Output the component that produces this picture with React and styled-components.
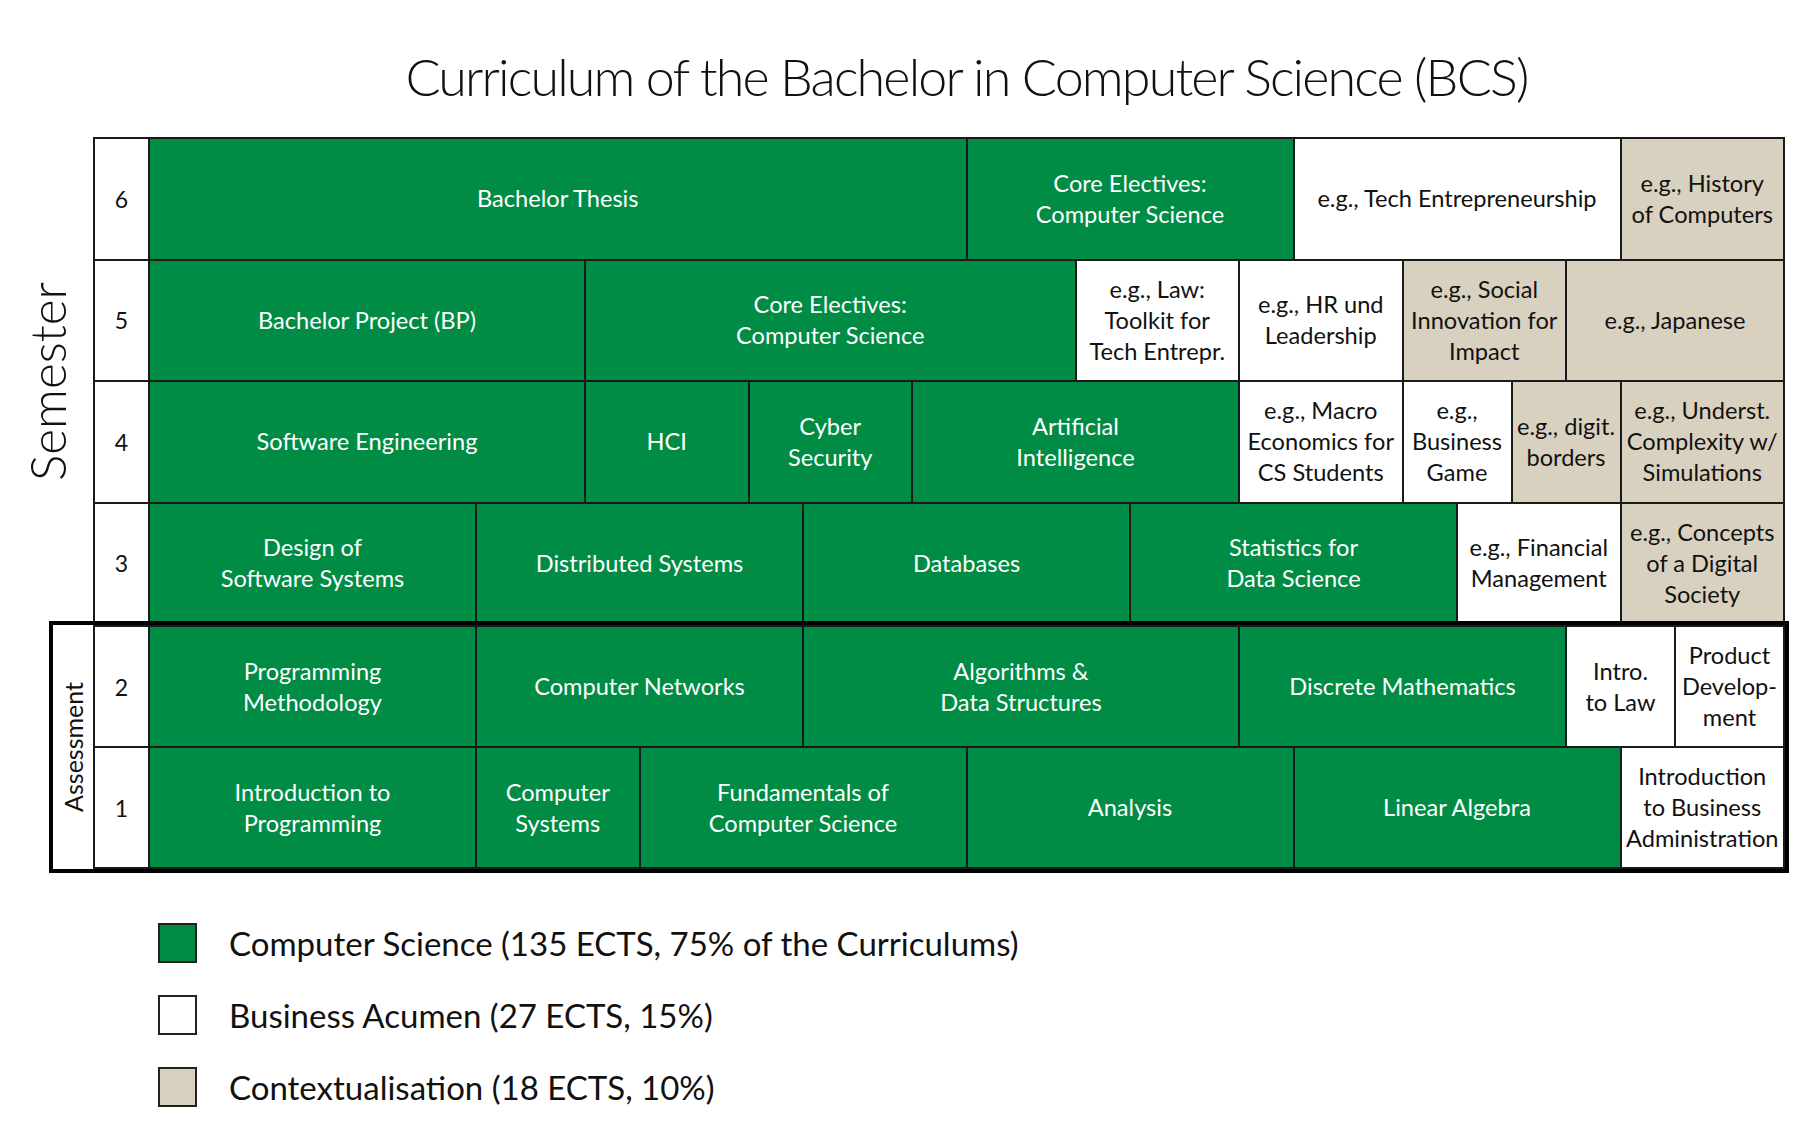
import styled, { createGlobalStyle } from "styled-components";

const GlobalStyle = createGlobalStyle`
  html, body {
    margin: 0;
    padding: 0;
    background: #ffffff;
  }
  body {
    font-family: Lato, "Open Sans", sans-serif;
    color: #1a1a1a;
  }
`;

const colors = {
  cs: "#008c44",
  ba: "#ffffff",
  ctx: "#d9d1bf",
  line: "#1a1a1a",
};

const upperRows = [
  {
    no: "6",
    cells: [
      { span: 15, kind: "cs", text: "Bachelor Thesis" },
      { span: 6, kind: "cs", text: "Core Electives:\nComputer Science" },
      { span: 6, kind: "ba", text: "e.g., Tech Entrepreneurship" },
      { span: 3, kind: "ctx", text: "e.g., History\nof Computers" },
    ],
  },
  {
    no: "5",
    cells: [
      { span: 8, kind: "cs", text: "Bachelor Project (BP)" },
      { span: 9, kind: "cs", text: "Core Electives:\nComputer Science" },
      { span: 3, kind: "ba", text: "e.g., Law:\nToolkit for\nTech Entrepr." },
      { span: 3, kind: "ba", text: "e.g., HR und\nLeadership" },
      { span: 3, kind: "ctx", text: "e.g.,  Social\nInnovation for\nImpact" },
      { span: 4, kind: "ctx", text: "e.g., Japanese" },
    ],
  },
  {
    no: "4",
    cells: [
      { span: 8, kind: "cs", text: "Software Engineering" },
      { span: 3, kind: "cs", text: "HCI" },
      { span: 3, kind: "cs", text: "Cyber\nSecurity" },
      { span: 6, kind: "cs", text: "Artificial\nIntelligence" },
      { span: 3, kind: "ba", text: "e.g., Macro\nEconomics for\nCS Students" },
      { span: 2, kind: "ba", text: "e.g.,\nBusiness\nGame" },
      { span: 2, kind: "ctx", text: "e.g., digit.\nborders" },
      { span: 3, kind: "ctx", text: "e.g., Underst.\nComplexity w/\nSimulations" },
    ],
  },
  {
    no: "3",
    cells: [
      { span: 6, kind: "cs", text: "Design of\nSoftware Systems" },
      { span: 6, kind: "cs", text: "Distributed Systems" },
      { span: 6, kind: "cs", text: "Databases" },
      { span: 6, kind: "cs", text: "Statistics for\nData Science" },
      { span: 3, kind: "ba", text: "e.g., Financial\nManagement" },
      { span: 3, kind: "ctx", text: "e.g., Concepts\nof a Digital\nSociety" },
    ],
  },
];

const lowerRows = [
  {
    no: "2",
    cells: [
      { span: 6, kind: "cs", text: "Programming\nMethodology" },
      { span: 6, kind: "cs", text: "Computer Networks" },
      { span: 8, kind: "cs", text: "Algorithms &\nData Structures" },
      { span: 6, kind: "cs", text: "Discrete Mathematics" },
      { span: 2, kind: "ba", text: "Intro.\nto Law" },
      { span: 2, kind: "ba", text: "Product\nDevelop-\nment" },
    ],
  },
  {
    no: "1",
    cells: [
      { span: 6, kind: "cs", text: "Introduction to\nProgramming" },
      { span: 3, kind: "cs", text: "Computer\nSystems" },
      { span: 6, kind: "cs", text: "Fundamentals of\nComputer Science" },
      { span: 6, kind: "cs", text: "Analysis" },
      { span: 6, kind: "cs", text: "Linear Algebra" },
      { span: 3, kind: "ba", text: "Introduction\nto Business\nAdministration" },
    ],
  },
];

const legend = [
  { kind: "cs", text: "Computer Science (135 ECTS, 75% of the Curriculums)" },
  { kind: "ba", text: "Business Acumen (27 ECTS, 15%)" },
  { kind: "ctx", text: "Contextualisation (18 ECTS, 10%)" },
];

const Page = styled.div`
  width: 1785px;
  display: flex;
  flex-direction: column;
`;

const Title = styled.h1`
  margin: 0 0 29px 148px;
  padding-top: 44px;
  font-weight: 300;
  font-size: 52px;
  line-height: 64px;
  text-align: center;
  color: #111;
  letter-spacing: -1.85px;
`;

const Section = styled.div`
  display: flex;
`;

const SideLabel = styled.div`
  width: 93px;
  display: flex;
  align-items: center;
  justify-content: center;
`;

const VerticalText = styled.span`
  writing-mode: vertical-rl;
  transform: rotate(180deg);
  font-weight: ${(p) => p.$weight};
  font-size: ${(p) => p.$size}px;
  color: #111;
`;

const LowerWrap = styled.div`
  display: flex;
  margin-left: 53px;
  outline: 4px solid #000;
  background: #fff;
`;

const AssessLabel = styled.div`
  width: 40px;
  display: flex;
  align-items: center;
  justify-content: center;
`;

const Grid = styled.div`
  flex: 1;
  display: grid;
  grid-template-columns: 53px repeat(30, 1fr);
  grid-template-rows: repeat(${(p) => p.$rows}, ${(p) => p.$rowHeight}px);
  gap: 2px;
  padding: 2px;
  background: ${colors.line};
`;

const NumCell = styled.div`
  grid-column: 1;
  background: #fff;
  display: flex;
  align-items: center;
  justify-content: center;
  font-size: 23px;
  color: #111;
`;

const Cell = styled.div`
  grid-column: span ${(p) => p.$span};
  background: ${(p) => colors[p.$kind]};
  color: ${(p) => (p.$kind === "cs" ? "#ffffff" : "#111111")};
  display: flex;
  align-items: center;
  justify-content: center;
  text-align: center;
  white-space: pre-line;
  font-size: 23.6px;
  line-height: 31px;
  overflow: hidden;
`;

const Legend = styled.div`
  display: flex;
  flex-direction: column;
  gap: 32px;
  margin: 54px 0 0 158px;
`;

const LegendItem = styled.div`
  display: flex;
  align-items: center;
  gap: 32px;
  font-size: 33px;
  line-height: 40px;
  color: #111;
`;

const Swatch = styled.span`
  width: 35px;
  height: 36px;
  border: 2px solid #222;
  background: ${(p) => colors[p.$kind]};
  flex-shrink: 0;
`;

const Rows = ({ rows }) =>
  rows.map((row) => [
    <NumCell key={`n${row.no}`}>{row.no}</NumCell>,
    ...row.cells.map((c, i) => (
      <Cell key={`${row.no}-${i}`} $span={c.span} $kind={c.kind}>
        {c.text}
      </Cell>
    )),
  ]);

export default function App() {
  return (
    <Page>
      <GlobalStyle />
      <Title>Curriculum of the Bachelor in Computer Science (BCS)</Title>
      <Section>
        <SideLabel>
          <VerticalText $size={49.5} $weight={300}>
            Semester
          </VerticalText>
        </SideLabel>
        <Grid $rows={4} $rowHeight={119.5}>
          <Rows rows={upperRows} />
        </Grid>
      </Section>
      <LowerWrap>
        <AssessLabel>
          <VerticalText $size={25} $weight={400}>
            Assessment
          </VerticalText>
        </AssessLabel>
        <Grid $rows={2} $rowHeight={119}>
          <Rows rows={lowerRows} />
        </Grid>
      </LowerWrap>
      <Legend>
        {legend.map((l) => (
          <LegendItem key={l.kind}>
            <Swatch $kind={l.kind} />
            {l.text}
          </LegendItem>
        ))}
      </Legend>
    </Page>
  );
}
